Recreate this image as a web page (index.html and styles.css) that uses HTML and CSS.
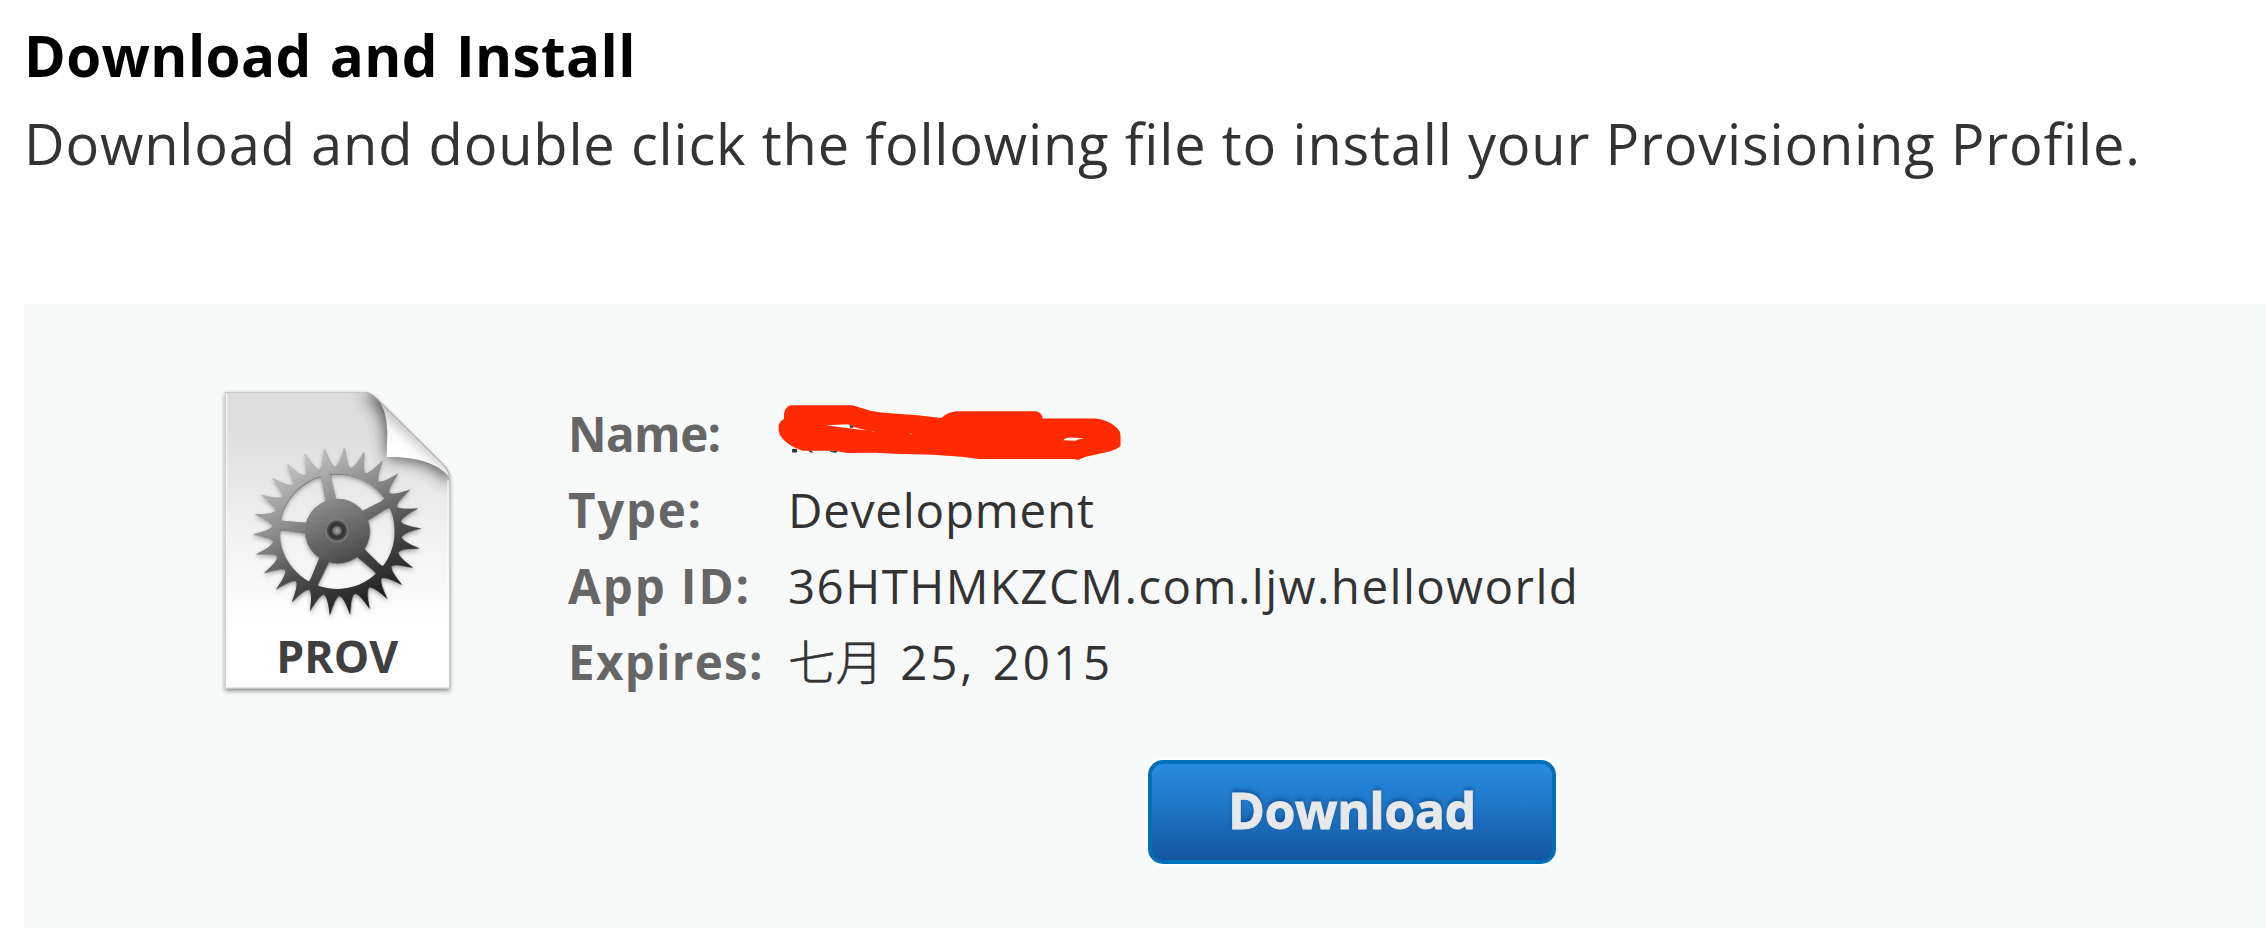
FILE: index.html
```html
<!DOCTYPE html>
<html lang="en">
<head>
<meta charset="utf-8">
<title>Download and Install</title>
<link rel="stylesheet" href="styles.css">
</head>
<body>
<main class="page">
  <h1 class="title"><span>Download and Install</span></h1>
  <p class="intro"><span>Download and double click the following file to install your Provisioning Profile.</span></p>
  <section class="panel">
    <div class="profile">
      <svg class="file-icon" viewBox="0 0 840 1020" role="img" aria-label="Provisioning profile">
        <defs>
          <linearGradient id="paper" x1="0" y1="67" x2="0" y2="955" gradientUnits="userSpaceOnUse">
            <stop offset="0" stop-color="#dcdcdc"/><stop offset=".15" stop-color="#dfdfdf"/><stop offset=".5" stop-color="#f2f2f2"/><stop offset=".8" stop-color="#fff"/>
          </linearGradient>
          <linearGradient id="metal" x1="290" y1="265" x2="520" y2="705" gradientUnits="userSpaceOnUse">
            <stop offset="0" stop-color="#c4c4c4"/><stop offset=".35" stop-color="#898989"/><stop offset=".65" stop-color="#4c4c4c"/><stop offset="1" stop-color="#1c1c1c"/>
          </linearGradient>
          <linearGradient id="hub" x1="370" y1="390" x2="450" y2="580" gradientUnits="userSpaceOnUse">
            <stop offset="0" stop-color="#8c8c8c"/><stop offset="1" stop-color="#484848"/>
          </linearGradient>
          <linearGradient id="curl" x1="570" y1="235" x2="630" y2="165" gradientUnits="userSpaceOnUse">
            <stop offset="0" stop-color="#fff"/><stop offset=".45" stop-color="#fafafa"/><stop offset="1" stop-color="#bdbdbd"/>
          </linearGradient>
          <radialGradient id="axle" cx=".5" cy=".5" r=".5">
            <stop offset="0" stop-color="#aaa"/><stop offset=".3" stop-color="#777"/><stop offset=".48" stop-color="#333"/><stop offset=".72" stop-color="#3b3b3b"/><stop offset="1" stop-color="#888"/>
          </radialGradient>
          <filter id="soft" x="-50%" y="-50%" width="200%" height="200%"><feGaussianBlur stdDeviation="24"/></filter>
          <filter id="drop" x="-10%" y="-10%" width="120%" height="120%"><feDropShadow dx="0" dy="7" stdDeviation="6" flood-opacity=".45"/></filter>
          <filter id="edge" x="-10%" y="-10%" width="120%" height="120%">
            <feDropShadow dx="1" dy="1" stdDeviation="2" flood-opacity=".7"/>
            <feDropShadow dx="0" dy="7" stdDeviation="6" flood-opacity=".35"/>
          </filter>
          <path id="sheet" d="M76 67H492C510 67 522 77 535 90L728 282C742 296 748 306 748 328V954H76Z"/>
          <clipPath id="sheet-clip"><use href="#sheet"/></clipPath>
          <path id="tooth" d="M384 300L389 291Q401 284 411 231Q421 284 433 291L438 300Z"/>
          <g id="teeth"><use href="#tooth"/><use href="#tooth" transform="rotate(13.846 411 484)"/></g>
          <path id="spoke" d="M390 302Q398 310 398 325L395 400H427L424 325Q424 310 432 302Z"/>
          <mask id="gear-mask" maskUnits="userSpaceOnUse" x="140" y="210" width="550" height="550">
            <g fill="#fff" transform="rotate(4.9 411 484)">
              <use href="#teeth"/>
              <use href="#teeth" transform="rotate(27.692 411 484)"/>
              <use href="#teeth" transform="rotate(55.385 411 484)"/>
              <use href="#teeth" transform="rotate(83.077 411 484)"/>
              <use href="#teeth" transform="rotate(110.769 411 484)"/>
              <use href="#teeth" transform="rotate(138.462 411 484)"/>
              <use href="#teeth" transform="rotate(166.154 411 484)"/>
              <use href="#teeth" transform="rotate(193.846 411 484)"/>
              <use href="#teeth" transform="rotate(221.538 411 484)"/>
              <use href="#teeth" transform="rotate(249.231 411 484)"/>
              <use href="#teeth" transform="rotate(276.923 411 484)"/>
              <use href="#teeth" transform="rotate(304.615 411 484)"/>
              <use href="#teeth" transform="rotate(332.308 411 484)"/>
            </g>
            <circle cx="411" cy="484" r="183" fill="none" stroke="#fff" stroke-width="20"/>
            <g fill="#fff" transform="rotate(-11.6 411 484)">
              <use href="#spoke"/>
              <use href="#spoke" transform="rotate(72 411 484)"/>
              <use href="#spoke" transform="rotate(144 411 484)"/>
              <use href="#spoke" transform="rotate(216 411 484)"/>
              <use href="#spoke" transform="rotate(288 411 484)"/>
            </g>
          </mask>
        </defs>
        <use href="#sheet" fill="url(#paper)" stroke="#c9c9c9" stroke-width="3" filter="url(#drop)"/>
        <g clip-path="url(#sheet-clip)">
          <path d="M490 75C560 110 562 200 560 264C640 265 710 280 748 340L770 300L560 60Z" fill="#444" opacity=".95" filter="url(#soft)"/>
          <path d="M80 70V950M744 330V950" stroke="#fff" stroke-width="4" opacity=".7"/>
        </g>
        <path d="M500 67C546 82 560 130 562 185L560 261C650 260 716 280 748 322C748 302 742 296 728 282L535 90C522 77 512 68 500 67Z" fill="url(#curl)"/>
        <path d="M500 68C512 70 522 77 535 90L728 282C740 294 746 304 748 318" fill="none" stroke="#aaa" stroke-width="3"/>
        <g filter="url(#edge)">
          <rect x="140" y="210" width="550" height="550" fill="url(#metal)" mask="url(#gear-mask)"/>
          <circle cx="412" cy="483" r="97" fill="url(#hub)"/>
        </g>
        <circle cx="411" cy="482" r="35" fill="url(#axle)"/>
        <text class="icon-label" x="229" y="909" textLength="366" lengthAdjust="spacingAndGlyphs">PROV</text>
      </svg>
      <dl class="details">
        <dt class="l-name"><span>Name:</span></dt>
        <dd class="redacted">
          <svg class="scribble" viewBox="590 40 910 175" preserveAspectRatio="none" aria-hidden="true">
            <path d="M632 176H645V186H632ZM674 180L680 186H687L682 180ZM727 180Q736 187 747 187L752 182ZM782 104H790L793 112H784Z" fill="#333"/>
            <path fill="#ff2a00" fill-rule="evenodd" d="M628 44H790L836 60L865 66L960 74L1022 82Q1038 66 1060 62H1270Q1286 66 1287 84H1425Q1452 86 1475 106Q1491 120 1491 136V166Q1482 177 1462 183L1400 199L1380 209L1368 206H1120L1075 199L1000 193L900 190L850 187L775 188L745 181H660Q625 168 606 143Q597 132 597 120V104Q599 92 611 85V68Q614 50 628 44ZM720 104L780 101L795 110L828 120L780 113ZM840 121L848 122L844 124ZM938 129L946 130L944 132ZM1341 149Q1346 141 1360 141L1395 143L1378 148L1374 151Z"/>
          </svg>
        </dd>
        <dt class="l-type"><span>Type:</span></dt><dd class="v-type"><span>Development</span></dd>
        <dt class="l-app"><span>App ID:</span></dt><dd class="v-app"><span>36HTHMKZCM.com.ljw.helloworld</span></dd>
        <dt class="l-exp"><span>Expires:</span></dt><dd class="v-exp"><span class="cjk">七月</span><span> 25, 2015</span></dd>
      </dl>
    </div>
    <button class="download" type="button"><span>Download</span></button>
  </section>
</main>
</body>
</html>
```
FILE: styles.css
```css
* { box-sizing: border-box; }
body { margin: 0; background: #fff; color: #333; font-family: "Open Sans", "Noto Sans CJK SC", sans-serif; overflow: hidden; }
.page { width: 2266px; height: 928px; padding: 16px 0 0 24px; display: flex; flex-direction: column; }
.title { margin: 0; height: 87px; line-height: 80px; font-size: 56.5px; font-weight: 700; color: #000; letter-spacing: 0.4px; word-spacing: 3px; white-space: nowrap; }
.intro { margin: 0; height: 80px; line-height: 80px; font-size: 56px; letter-spacing: 0.81px; white-space: nowrap; }
.panel { margin-top: 121px; flex: 1; background: #f8fafa; padding: 66px 0 0 176px; }
.profile { display: flex; align-items: flex-start; height: 390px; }
.file-icon { width: 280px; height: 340px; flex: none; }
.icon-label { font: 700 136px "Open Sans", sans-serif; fill: #404040; }
.details { margin: 26px 0 0 88px; display: grid; grid-template-columns: 220px auto; grid-auto-rows: 76px; line-height: 76px; font-size: 47.5px; white-space: nowrap; }
.details dt { font-weight: 700; color: #666; }
.details dd { margin: 0; }
.l-name { letter-spacing: -0.6px; }
.l-type { letter-spacing: 1.7px; }
.l-app { letter-spacing: 1.9px; }
.l-exp { letter-spacing: 1.3px; }
.v-type { letter-spacing: 0.8px; }
.v-app { letter-spacing: 1.43px; }
.v-exp { letter-spacing: 2.9px; word-spacing: 2px; }
.redacted { position: relative; }
.scribble { position: absolute; left: -12px; top: 8px; width: 348px; height: 58px; }
.v-exp span { white-space: pre; }
.v-exp .cjk { font-family: "Noto Sans CJK SC", sans-serif; font-weight: 300; line-height: 1; letter-spacing: 0; -webkit-text-stroke: 0.5px #333; }
.download { display: block; width: 408px; height: 104px; margin-left: 948px; padding: 0 0 4px; border: 4px solid #0070b8; border-radius: 15px; background: linear-gradient(#268bdf, #2079cb 40%, #14559d); box-shadow: 0 0 2px 2px #fff; color: #e8e8e8; font: 700 49.5px/88px "Open Sans", sans-serif; letter-spacing: -0.2px; text-shadow: 0 -3px 4px rgba(0, 55, 110, .55); -webkit-text-stroke: 1px #e8e8e8; }
```
